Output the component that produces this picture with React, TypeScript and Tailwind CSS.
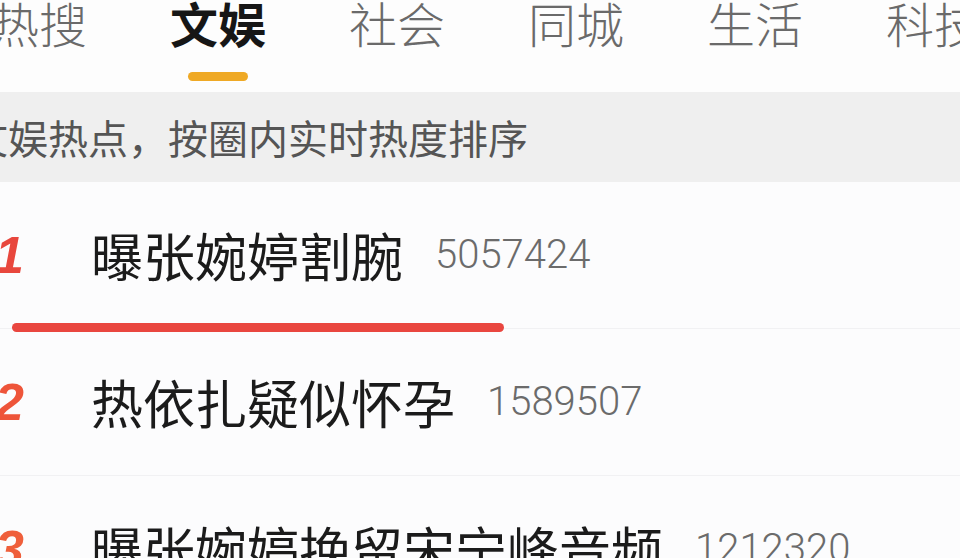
const tabs = ["热搜", "文娱", "社会", "同城", "生活", "科技"];

const items = [
  { rank: 1, title: "曝张婉婷割腕", hot: "5057424", color: "text-[#e8473d]", mark: true },
  { rank: 2, title: "热依扎疑似怀孕", hot: "1589507", color: "text-[#ee553a]", mark: false },
  { rank: 3, title: "曝张婉婷挽留宋宁峰音频", hot: "1212320", color: "text-[#ef5f3b]", mark: false },
];

const cjk = "font-['Noto_Sans_CJK_SC',sans-serif]";

export default function App() {
  return (
    <div className={`w-[960px] h-[558px] overflow-hidden bg-[#fcfcfd] ${cjk}`}>
      {/* tab bar */}
      <div className="h-[92px] bg-[#fdfdfd] flex gap-[83px] ml-[-9px]">
        {tabs.map((t) => {
          const active = t === "文娱";
          return (
            <div key={t} className="flex flex-col items-center shrink-0">
              <span
                className={`text-[48px] leading-none mt-[-2px] whitespace-nowrap ${
                  active ? "text-[#161616] font-bold" : "text-[#6a6a6a] font-light"
                }`}
              >
                {t}
              </span>
              {active && <span className="mt-[26px] w-[60px] h-[9px] rounded-full bg-[#efa925]" />}
            </div>
          );
        })}
      </div>

      {/* subtitle band */}
      <div className="h-[90px] bg-[#efefef] flex items-center overflow-hidden">
        <span className="ml-[-32px] text-[40px] leading-none text-[#555] whitespace-nowrap">
          文娱热点，按圈内实时热度排序
        </span>
      </div>

      {/* list */}
      {items.map((it) => (
        <div key={it.rank} className="relative h-[147px] border-b border-[#f1f1f3] flex items-center">
          <span
            className={`w-[96px] ml-[-5px] shrink-0 text-[52px] leading-none font-bold italic font-['Liberation_Sans',sans-serif] ${it.color}`}
          >
            {it.rank}
          </span>
          <span className="text-[52px] leading-none text-[#1b1b1b] whitespace-nowrap">{it.title}</span>
          <span className="ml-[32px] text-[40px] leading-none font-light text-[#6b6b6b] font-['Roboto',sans-serif] whitespace-nowrap">
            {it.hot}
          </span>
          {it.mark && (
            <span className="absolute left-[12px] top-[141px] w-[492px] h-[9px] rounded-full bg-[#e9463f]" />
          )}
        </div>
      ))}
    </div>
  );
}
